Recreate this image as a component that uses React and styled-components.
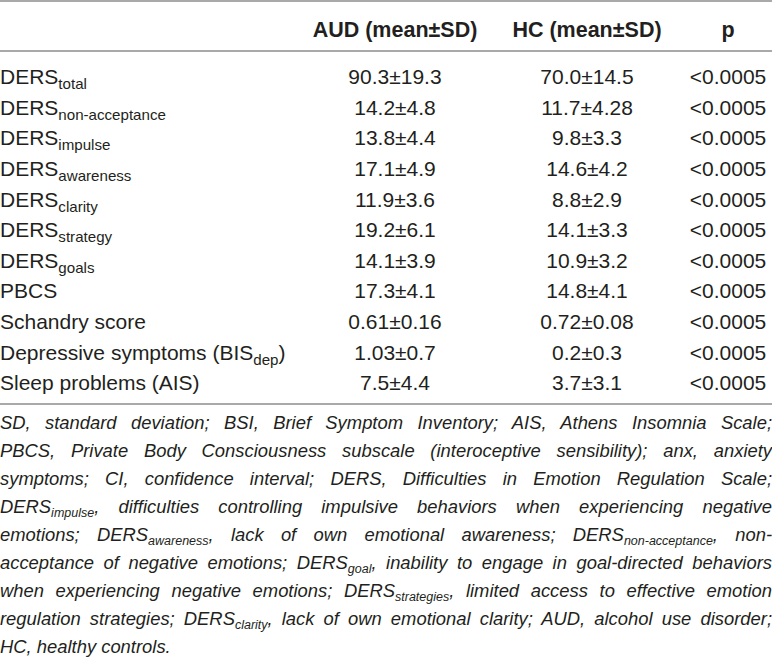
import styled, { createGlobalStyle } from "styled-components"

const GlobalStyle = createGlobalStyle`
  *, *::before, *::after {
    box-sizing: border-box;
  }
  body {
    margin: 0;
    background: #fff;
    font-family: "Liberation Sans", Arial, sans-serif;
    color: #231f20;
  }
`;

const Page = styled.div`
  width: 772px;
`;

const Table = styled.div`
  border-top: 2px solid #a9a9a9;
  border-bottom: 2px solid #a9a9a9;
  padding-bottom: 4px;
`;

const Grid = styled.div`
  display: grid;
  grid-template-columns: 300px 190px 194px 88px;
  align-items: center;
  font-size: 21px;
  white-space: nowrap;
`;

const HeadRow = styled(Grid)`
  height: 50px;
  padding-top: 8px;
  font-size: 21.5px;
  font-weight: bold;
  border-bottom: 2px solid #a9a9a9;
  margin-bottom: 10px;
`;

const Row = styled(Grid)`
  height: 30.6px;
`;

const Cell = styled.div`
  text-align: ${(p) => p.$align || "center"};
`;

const Sub = styled.sub`
  font-size: ${(p) => p.$size || "0.72em"};
  line-height: 0;
  vertical-align: -0.3em;
`;

const Note = styled.div`
  padding-top: 4px;
  font-style: italic;
  font-size: 18.4px;
  line-height: 28px;
`;

const NoteLine = styled.div`
  text-align: justify;
  text-align-last: ${(p) => (p.$last ? "left" : "justify")};
  white-space: nowrap;
`;

const rows = [
  [<>DERS<Sub>total</Sub></>, "90.3±19.3", "70.0±14.5"],
  [<>DERS<Sub>non-acceptance</Sub></>, "14.2±4.8", "11.7±4.28"],
  [<>DERS<Sub>impulse</Sub></>, "13.8±4.4", "9.8±3.3"],
  [<>DERS<Sub>awareness</Sub></>, "17.1±4.9", "14.6±4.2"],
  [<>DERS<Sub>clarity</Sub></>, "11.9±3.6", "8.8±2.9"],
  [<>DERS<Sub>strategy</Sub></>, "19.2±6.1", "14.1±3.3"],
  [<>DERS<Sub>goals</Sub></>, "14.1±3.9", "10.9±3.2"],
  ["PBCS", "17.3±4.1", "14.8±4.1"],
  ["Schandry score", "0.61±0.16", "0.72±0.08"],
  [<>Depressive symptoms (BIS<Sub>dep</Sub>)</>, "1.03±0.7", "0.2±0.3"],
  ["Sleep problems (AIS)", "7.5±4.4", "3.7±3.1"],
];

const S = ({ children }) => <Sub $size="0.68em">{children}</Sub>;

export default function App() {
  return (
    <Page>
      <GlobalStyle />
      <Table>
        <HeadRow>
          <Cell $align="left" />
          <Cell>AUD (mean±SD)</Cell>
          <Cell>HC (mean±SD)</Cell>
          <Cell>p</Cell>
        </HeadRow>
        {rows.map(([label, aud, hc], i) => (
          <Row key={i}>
            <Cell $align="left">{label}</Cell>
            <Cell>{aud}</Cell>
            <Cell>{hc}</Cell>
            <Cell>&lt;0.0005</Cell>
          </Row>
        ))}
      </Table>
      <Note>
        <NoteLine>SD, standard deviation; BSI, Brief Symptom Inventory; AIS, Athens Insomnia Scale;</NoteLine>
        <NoteLine>PBCS, Private Body Consciousness subscale (interoceptive sensibility); anx, anxiety</NoteLine>
        <NoteLine>symptoms; CI, confidence interval; DERS, Difficulties in Emotion Regulation Scale;</NoteLine>
        <NoteLine>DERS<S>impulse</S>, difficulties controlling impulsive behaviors when experiencing negative</NoteLine>
        <NoteLine>emotions; DERS<S>awareness</S>, lack of own emotional awareness; DERS<S>non-acceptance</S>, non-</NoteLine>
        <NoteLine>acceptance of negative emotions; DERS<S>goal</S>, inability to engage in goal-directed behaviors</NoteLine>
        <NoteLine>when experiencing negative emotions; DERS<S>strategies</S>, limited access to effective emotion</NoteLine>
        <NoteLine>regulation strategies; DERS<S>clarity</S>, lack of own emotional clarity; AUD, alcohol use disorder;</NoteLine>
        <NoteLine $last>HC, healthy controls.</NoteLine>
      </Note>
    </Page>
  )
}
